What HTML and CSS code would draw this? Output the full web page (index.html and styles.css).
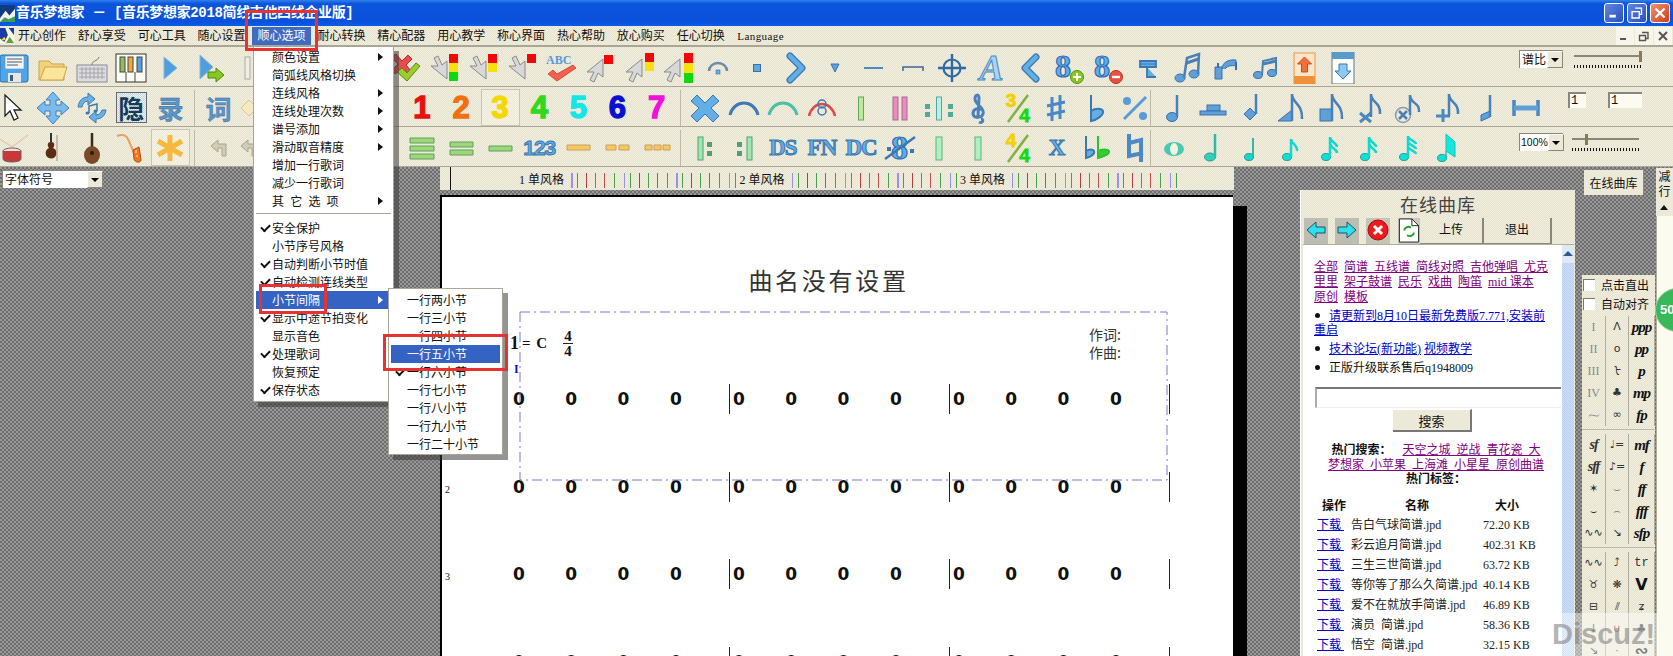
FILE: index.html
```html
<!DOCTYPE html>
<html lang="zh">
<head>
<meta charset="utf-8">
<title>音乐梦想家</title>
<link rel="stylesheet" href="styles.css">
</head>
<body>
<svg class="defs" width="0" height="0" aria-hidden="true">
  <defs>
    <symbol id="save" viewBox="0 0 32 32"><rect x="2" y="3" width="28" height="27" rx="2" fill="#4fa5ea" stroke="#2a6ea8"/><rect x="7" y="4" width="19" height="13" fill="#f4f4f4" stroke="#5a8fc0" stroke-width=".6"/><path d="M9 7h15M9 10h15M9 13h11" stroke="#4a5a70"/><rect x="10" y="21" width="13" height="9" fill="#e6e6e6"/><rect x="12" y="23" width="3" height="6" fill="#3d5a78"/></symbol>
    <symbol id="folder" viewBox="0 0 32 32"><path d="M2 9h10l3 3h12v16H2z" fill="#f2d27a" stroke="#c9a549"/><path d="M3 28l5-13h22l-4 13z" fill="#fbe49b" stroke="#c9a549"/></symbol>
    <symbol id="kbd" viewBox="0 0 32 32"><path d="M16 13c0-5 5-3 7-8" fill="none" stroke="#777"/><rect x="1" y="13" width="30" height="17" fill="#dcdcdc" stroke="#8a8a9a"/><path d="M3 17h26M3 21h26M3 25h26M6 15v12M10 15v12M14 15v12M18 15v12M22 15v12M26 15v12" stroke="#9a9aa6" stroke-width=".8"/></symbol>
    <symbol id="piano" viewBox="0 0 32 32"><rect x="1" y="2" width="30" height="28" fill="#fcfcf4" stroke="#333"/><rect x="5" y="5" width="5" height="15" fill="#8cc05a" stroke="#444"/><rect x="13" y="5" width="5" height="15" fill="#f0a838" stroke="#444"/><rect x="22" y="5" width="5" height="15" fill="#5aa0e0" stroke="#444"/><path d="M11 20v10M20 20v10" stroke="#444"/></symbol>
    <symbol id="play" viewBox="0 0 32 32"><path d="M10 5l13 11-13 11z" fill="#4f9fe0" stroke="#8ab4d8"/></symbol>
    <symbol id="playg" viewBox="0 0 32 32"><path d="M6 3l13 12-13 12z" fill="#4f9fe0" stroke="#8ab4d8"/><path d="M14 20h8v-4l8 7-8 7v-4h-8z" fill="#86c820" stroke="#4f8a10"/></symbol>
    <symbol id="vbar" viewBox="0 0 32 32"><rect x="12" y="5" width="5" height="22" fill="#f0eee0" stroke="#aaa"/></symbol>
    <symbol id="chk" viewBox="0 0 32 32"><path d="M2 5l5-3 6 7 6-6 4 4-6 6 6 7-4 4-6-7-7 5-3-4 6-6z" fill="#e84c4c" stroke="#b83030"/><path d="M8 20l5-4 5 5 9-10 4 3-13 15z" fill="#9ccc30" stroke="#5a8a10"/></symbol>
    <path id="cur" d="M3 3v18l5-4 4 9 4-2-4-8h7z" fill="#d8d8d8" stroke="#8a8a8a"/>
    <symbol id="sd3" viewBox="0 0 32 32"><use href="#cur" transform="rotate(180 11 16) translate(0 2)"/><rect x="21" y="2" width="9" height="9" fill="#f00808"/><rect x="21" y="11" width="9" height="9" fill="#f8e010"/><rect x="21" y="20" width="9" height="9" fill="#10d810"/></symbol>
    <symbol id="sd2" viewBox="0 0 32 32"><use href="#cur" transform="rotate(180 11 16) translate(0 2)"/><rect x="21" y="2" width="9" height="9" fill="#f00808"/><rect x="21" y="11" width="9" height="9" fill="#f8e010"/></symbol>
    <symbol id="sd1" viewBox="0 0 32 32"><use href="#cur" transform="rotate(180 11 16) translate(0 2)"/><rect x="21" y="2" width="9" height="9" fill="#f00808"/></symbol>
    <symbol id="abc" viewBox="0 0 32 32"><text class="svgt" x="1" y="12" font-size="12" fill="#5a9ad8">ABC</text><path d="M3 22l5-4 4 4 16-9 3 3-19 13z" fill="#f46050" stroke="#c03020" stroke-width=".7"/></symbol>
    <symbol id="su1" viewBox="0 0 32 32"><use href="#cur" transform="translate(22 4) scale(-1 1)"/><rect x="20" y="3" width="9" height="9" fill="#f00808"/></symbol>
    <symbol id="su2" viewBox="0 0 32 32"><use href="#cur" transform="translate(21 4) scale(-1 1)"/><rect x="21" y="1" width="9" height="9" fill="#f00808"/><rect x="21" y="10" width="9" height="9" fill="#f8e010"/></symbol>
    <symbol id="su3" viewBox="0 0 32 32"><use href="#cur" transform="translate(20 4) scale(-1 1)"/><rect x="21" y="1" width="9" height="10" fill="#f00808"/><rect x="21" y="11" width="9" height="10" fill="#f8e010"/><rect x="21" y="21" width="9" height="10" fill="#10d810"/></symbol>
    <symbol id="arcs" viewBox="0 0 32 32"><path d="M7 19a9 8 0 0 1 18 0" fill="none" stroke="#6d8aa6" stroke-width="2.5"/><rect x="14" y="18" width="4" height="4" fill="#5fb0e8" stroke="#3a70b0" stroke-width=".6"/></symbol>
    <symbol id="sq" viewBox="0 0 32 32"><rect x="12.5" y="12.5" width="7" height="7" fill="#5fa8e4" stroke="#3a70b0"/></symbol>
    <symbol id="chr" viewBox="0 0 32 32"><path d="M10 4l12 12-12 12" fill="none" stroke="#3a78b0" stroke-width="7" stroke-linejoin="round" stroke-linecap="round"/><path d="M10 4l12 12-12 12" fill="none" stroke="#62aee6" stroke-width="4.5" stroke-linejoin="round" stroke-linecap="round"/></symbol>
    <symbol id="chl" viewBox="0 0 32 32"><path d="M22 5l-11 11 11 11" fill="none" stroke="#3a78b0" stroke-width="7" stroke-linejoin="round" stroke-linecap="round"/><path d="M22 5l-11 11 11 11" fill="none" stroke="#62aee6" stroke-width="4.5" stroke-linejoin="round" stroke-linecap="round"/></symbol>
    <symbol id="tri" viewBox="0 0 32 32"><path d="M12 12h8l-4 8z" fill="#5fa0d8" stroke="#3a70b0"/></symbol>
    <symbol id="d1" viewBox="0 0 32 32"><rect x="6" y="15" width="19" height="2" fill="#4a8ac8"/></symbol>
    <symbol id="d2" viewBox="0 0 32 32"><path d="M6 19v-4h20v4" fill="none" stroke="#3a6a9a" stroke-width="1.5"/></symbol>
    <symbol id="cross" viewBox="0 0 32 32"><circle cx="16" cy="16" r="8.5" fill="none" stroke="#2f6aa8" stroke-width="2.2"/><path d="M16 2v28M2 16h28" stroke="#2f6aa8" stroke-width="2.4"/></symbol>
    <symbol id="p8" viewBox="0 0 32 32"><text class="svgt" x="1" y="25" font-size="32" fill="#62aee6" stroke="#2f6db5" stroke-width="1.2">8</text><circle cx="23" cy="25" r="6.5" fill="#88c820" stroke="#5a8a10"/><path d="M23 21v8M19 25h8" stroke="#fff" stroke-width="2"/></symbol>
    <symbol id="m8" viewBox="0 0 32 32"><text class="svgt" x="1" y="25" font-size="32" fill="#62aee6" stroke="#2f6db5" stroke-width="1.2">8</text><circle cx="23" cy="25" r="6.5" fill="#e85040" stroke="#b03020"/><path d="M19 25h8" stroke="#fff" stroke-width="2.4"/></symbol>
    <symbol id="tee" viewBox="0 0 32 32"><path d="M8 9h16v6H8zM15 15v10h9" fill="#62aee6" stroke="#3a78b0" stroke-width="1.800"/><path d="M8 12h16" stroke="#3a78b0"/></symbol>
    <symbol id="notes2" viewBox="0 0 32 32"><ellipse cx="9" cy="26" rx="5" ry="4" fill="#5fa0d8" stroke="#3a70b0"/><ellipse cx="23" cy="22" rx="5" ry="4" fill="#5fa0d8" stroke="#3a70b0"/><path d="M13 26L16 6 28 2 27 22" fill="none" stroke="#4a80b8" stroke-width="2.5"/><path d="M15.500 11l12-4" stroke="#4a80b8" stroke-width="3"/></symbol>
    <symbol id="notes3" viewBox="0 0 32 32"><path d="M5 15h7v12H5zM12 17c0-6 6-10 14-9v6c-5-1-9 0-11 3" fill="#5fa0d8" stroke="#3a70b0"/><path d="M8 16v-5M26 10v8" stroke="#3a70b0" stroke-width="2"/></symbol>
    <symbol id="notes4" viewBox="0 0 32 32"><ellipse cx="9" cy="23" rx="4.500" ry="3.500" fill="#5fa0d8" stroke="#3a70b0"/><ellipse cx="23" cy="21" rx="4.500" ry="3.500" fill="#5fa0d8" stroke="#3a70b0"/><path d="M13 23l1-14 13-3v15" fill="none" stroke="#4a80b8" stroke-width="2"/><path d="M14 12l13-3" stroke="#4a80b8" stroke-width="3"/></symbol>
    <symbol id="upl" viewBox="0 0 32 32"><rect x="6" y="1" width="21" height="31" fill="#fbe6cc" stroke="#f0953a"/><rect x="6" y="24" width="21" height="8" fill="#f0903a"/><path d="M16.500 5l7 7h-4v8h-6v-8h-4z" fill="#f0703a" stroke="#c85020"/></symbol>
    <symbol id="dnl" viewBox="0 0 32 32"><rect x="5" y="0" width="22" height="32" fill="#fcfcfc" stroke="#5a7a90"/><rect x="5" y="0" width="22" height="7" fill="#5a9ac8"/><path d="M16 27l-8-8h4v-7h8v7h4z" fill="#8cc8f0" stroke="#3a78b0"/></symbol>
    <symbol id="arrow" viewBox="0 0 32 32"><path d="M7 3v21l5-5 4 9 4-2-4-8h7z" fill="#fff" stroke="#222" stroke-width="1.3"/></symbol>
    <symbol id="move" viewBox="0 0 32 32"><path d="M16 0l7 8h-4v5h5V9l8 7-8 7v-4h-5v5h4l-7 8-7-8h4v-5H8v4l-8-7 8-7v4h5V8H9z" fill="#7cbcec" stroke="#3a80bc"/></symbol>
    <symbol id="swap" viewBox="0 0 32 32"><path d="M2 15C3 8 7 5 12 5V1l7 6-7 6V9c-3 0-5 2-6 6z" fill="#6ab0e6" stroke="#3a78b0"/><path d="M30 18c-1 6-5 9-10 9v4l-7-6 7-6v4c3 0 5-2 6-5z" fill="#6ab0e6" stroke="#3a78b0"/><path d="M13 21v-7l8-2v7" fill="none" stroke="#3a78b0" stroke-width="1.500"/><ellipse cx="11.500" cy="21" rx="2" ry="1.500" fill="#3a78b0"/><ellipse cx="19.500" cy="19" rx="2" ry="1.500" fill="#3a78b0"/></symbol>
    <symbol id="diam" viewBox="0 0 32 32"><path d="M8 16l8-8 8 8-8 8z" fill="#f4e9c0" stroke="#d8c890"/></symbol>
    <symbol id="x" viewBox="0 0 32 32"><path d="M8 3l8 8 8-8 6 6-8 7 8 8-6 6-8-8-8 8-6-6 8-8-8-7z" fill="#62aee6" stroke="#3a78b0"/></symbol>
    <symbol id="arcb" viewBox="0 0 32 32"><path d="M2 23C6 7 26 7 30 23" fill="none" stroke="#3e78b8" stroke-width="3"/></symbol>
    <symbol id="arcg" viewBox="0 0 32 32"><path d="M2 23C6 7 26 7 30 23" fill="none" stroke="#4ac0a8" stroke-width="3"/></symbol>
    <symbol id="arcr" viewBox="0 0 32 32"><path d="M3 24C7 8 25 8 29 24" fill="none" stroke="#e04848" stroke-width="2.500"/><circle cx="16" cy="12" r="4" fill="none" stroke="#3a78b0" stroke-width="1.500"/><circle cx="16" cy="19" r="4" fill="none" stroke="#3a78b0" stroke-width="1.500"/></symbol>
    <symbol id="bg" viewBox="0 0 32 32"><rect x="13.500" y="5" width="5" height="23" fill="#c0e89a" stroke="#60a860"/></symbol>
    <symbol id="bp" viewBox="0 0 32 32"><rect x="9" y="5" width="5" height="23" fill="#f08ab8" stroke="#a06aa0"/><rect x="18" y="5" width="5" height="23" fill="#f08ab8" stroke="#a06aa0"/></symbol>
    <symbol id="brep" viewBox="0 0 32 32"><rect x="13.500" y="5" width="5" height="23" fill="#b8f0e8" stroke="#50a8a0"/><path d="M2 12h5v5H2zM2 20h5v5H2zM25 12h5v5h-5zM25 20h5v5h-5z" fill="#50a8a0"/></symbol>
    <symbol id="bn" viewBox="0 0 32 32"><rect x="13" y="5" width="6" height="23" fill="#b0f0c0" stroke="#60b080"/></symbol>
    <symbol id="repl" viewBox="0 0 32 32"><rect x="9" y="5" width="5" height="23" fill="#a0e8b0" stroke="#50a070"/><path d="M18 10h5v5h-5zM18 19h5v5h-5z" fill="#50a070"/></symbol>
    <symbol id="repr" viewBox="0 0 32 32"><rect x="19" y="5" width="5" height="23" fill="#a0e8b0" stroke="#50a070"/><path d="M9 10h5v5H9zM9 19h5v5H9z" fill="#50a070"/></symbol>
    <symbol id="clef" viewBox="0 0 32 32"><path d="M17 30c4 2 5-3 2-3M16 24L17 6c0-4-4-4-4 1 0 6 10 8 8 15-1 4-9 5-10 0 0-5 5-7 7-3" fill="none" stroke="#4a80c0" stroke-width="3"/></symbol>
    <symbol id="sharp" viewBox="0 0 32 32"><path d="M12 5v24M20 3v24M7 14l18-4M7 23l18-4" stroke="#4a88c8" stroke-width="3"/></symbol>
    <symbol id="flat" viewBox="0 0 32 32"><path d="M11 3v26c6-1 13-6 12-10-1-3-8-3-12 0" fill="#62aee6" stroke="#3a78b0" stroke-width="2"/></symbol>
    <symbol id="ratio" viewBox="0 0 32 32"><path d="M27 5L5 27" stroke="#5a9ad8" stroke-width="3"/><circle cx="8" cy="9" r="4" fill="#5a9ad8"/><circle cx="24" cy="24" r="4" fill="#5a9ad8"/></symbol>
    <symbol id="n1" viewBox="0 0 32 32"><ellipse cx="14" cy="25" rx="5.500" ry="4.500" fill="#5fa0d8" stroke="#3a70b0"/><path d="M19 25V3" stroke="#4a80b8" stroke-width="2.500"/></symbol>
    <symbol id="rest" viewBox="0 0 32 32"><rect x="10" y="13" width="13" height="6" fill="#5fa0d8" stroke="#3a70b0"/><rect x="3" y="19" width="26" height="4" fill="#5fa0d8" stroke="#3a70b0"/></symbol>
    <symbol id="nd" viewBox="0 0 32 32"><path d="M8 22l6-6 6 6-6 6z" fill="#5fa0d8" stroke="#3a70b0"/><path d="M20 22V2" stroke="#4a80b8" stroke-width="2.500"/></symbol>
    <symbol id="nt" viewBox="0 0 32 32"><path d="M3 29L17 18v11z" fill="#5fa0d8" stroke="#3a70b0"/><path d="M17 29V2c0 9 11 10 10 25" fill="none" stroke="#4a80b8" stroke-width="2.500"/></symbol>
    <symbol id="ns" viewBox="0 0 32 32"><rect x="6" y="17" width="12" height="12" fill="#5fa0d8" stroke="#3a70b0"/><path d="M18 29V2c0 9 11 10 10 25" fill="none" stroke="#4a80b8" stroke-width="2.500"/></symbol>
    <symbol id="nx" viewBox="0 0 32 32"><path d="M7 21l11 9M18 21L7 30" stroke="#4a88c0" stroke-width="3"/><path d="M18 25V2c0 9 10 8 9 20" fill="none" stroke="#4a80b8" stroke-width="2.500"/></symbol>
    <symbol id="nc" viewBox="0 0 32 32"><circle cx="11" cy="23" r="7.500" fill="none" stroke="#8a98b0" stroke-width="1.500"/><path d="M7 19l8 8M15 19l-8 8" stroke="#4a80b8" stroke-width="2.500"/><path d="M18 23V3c0 9 10 7 9 17" fill="none" stroke="#4a80b8" stroke-width="2.500"/></symbol>
    <symbol id="np" viewBox="0 0 32 32"><path d="M5 24h14M12 17v13" stroke="#4a88c0" stroke-width="3"/><path d="M18 24V2c0 9 10 8 9 20" fill="none" stroke="#4a80b8" stroke-width="2.500"/></symbol>
    <symbol id="nq" viewBox="0 0 32 32"><path d="M10 23l9-4v6l-9 4z" fill="#5fa0d8" stroke="#3a70b0"/><path d="M19 25V3" stroke="#4a80b8" stroke-width="2.500"/></symbol>
    <symbol id="hb" viewBox="0 0 32 32"><path d="M4 8v16M28 8v16" stroke="#4a88c0" stroke-width="3.500"/><rect x="4" y="13.500" width="24" height="5" fill="#5fa0d8"/></symbol>
    <symbol id="drum" viewBox="0 0 32 32"><path d="M0 6l16 10M30 3L14 15" stroke="#e8c4a8" stroke-width="1.200"/><ellipse cx="14" cy="19" rx="9" ry="3" fill="#f0e0d8" stroke="#666"/><path d="M5 19v8c0 4 18 4 18 0v-8" fill="#c83838" stroke="#666"/></symbol>
    <symbol id="violin" viewBox="0 0 32 32"><path d="M14 1v9" stroke="#333" stroke-width="2"/><path d="M20 3v26" stroke="#a89070"/><path d="M14 10c-5 0-3 5-2 6-2 1-4 3-3 7s9 5 10 0-1-6-3-7c1-1 3-6-2-6z" fill="#5a2c14"/></symbol>
    <symbol id="mando" viewBox="0 0 32 32"><path d="M16 1v15" stroke="#3a2a1a" stroke-width="2.500"/><ellipse cx="16" cy="23" rx="8" ry="9" fill="#7a4a28"/><circle cx="16" cy="21" r="2" fill="#2a1a0a"/></symbol>
    <symbol id="sax" viewBox="0 0 32 32"><path d="M2 4c5-2 9-1 11 3l6 14" fill="none" stroke="#e8a060" stroke-width="2"/><path d="M18 18l6-3 2 13c0 3-6 3-7-1z" fill="#f07820" stroke="#b84810"/><path d="M21 18v3M22 23v2" stroke="#fff0c0"/></symbol>
    <symbol id="ast" viewBox="0 0 32 32"><path d="M16 3v26M4 9l24 14M28 9L4 23" stroke="#f6b840" stroke-width="5"/></symbol>
    <symbol id="ag" viewBox="0 0 32 32"><path d="M8 14l7-6v4h8v12h-4v-8h-4v4z" fill="#d0ccb8" stroke="#a8a48c"/></symbol>
    <symbol id="l3" viewBox="0 0 32 32"><path d="M4 6h24v5H4zM4 14h24v5H4zM4 22h24v5H4z" fill="#9cd878" stroke="#60a060"/></symbol>
    <symbol id="l2" viewBox="0 0 32 32"><path d="M5 10h23v5H5zM5 18h23v5H5z" fill="#9cd878" stroke="#60a060"/></symbol>
    <symbol id="l1" viewBox="0 0 32 32"><path d="M5 14h23v5H5z" fill="#9cd878" stroke="#60a060"/></symbol>
    <symbol id="o1" viewBox="0 0 32 32"><path d="M5 13h23v5H5z" fill="#f8c860" stroke="#c8a060"/></symbol>
    <symbol id="o2" viewBox="0 0 32 32"><path d="M5 13h10v5H5zM18 13h10v5H18z" fill="#f8c860" stroke="#c8a060"/></symbol>
    <symbol id="o3" viewBox="0 0 32 32"><path d="M4 13h7v5H4zM13 13h7v5h-7zM22 13h7v5h-7z" fill="#f8c860" stroke="#c8a060"/></symbol>
    <symbol id="segno" viewBox="0 0 32 32"><text class="svgt" x="7" y="27" font-size="34" fill="#62aee6" stroke="#2f6db5" stroke-width="1.200">8</text><path d="M1 27L31 5" stroke="#3a78b0" stroke-width="2.500"/><path d="M3 15h4v4H3zM26 17h4v4h-4z" fill="#3a78b0"/></symbol>
    <symbol id="ts" viewBox="0 0 32 32"><path d="M27 3L7 30" stroke="#80b040" stroke-width="2.500"/></symbol>
    <symbol id="flat2" viewBox="0 0 32 32"><path d="M6 4v22c5-1 9-4 8-7-1-2-5-2-8 0" fill="#62aee6" stroke="#3a78b0" stroke-width="2"/><path d="M18 4v22c5-1 12-4 11-7-1-2-8-2-11 0" fill="#30d030" stroke="#30c030" stroke-width="2"/></symbol>
    <symbol id="nat" viewBox="0 0 32 32"><path d="M10 2v22l14-3M22 30V8L10 11" fill="none" stroke="#4a88c8" stroke-width="4"/></symbol>
    <symbol id="cw" viewBox="0 0 32 32"><ellipse cx="16" cy="17" rx="10" ry="7" fill="#4ac8b0"/><ellipse cx="16" cy="17" rx="4" ry="6" fill="#f4f2e0"/></symbol>
    <symbol id="c2" viewBox="0 0 32 32"><ellipse cx="13" cy="25" rx="5.500" ry="4" fill="#30d0b8" stroke="#2aa090"/><path d="M18 25V2" stroke="#30b8a8" stroke-width="2.500"/></symbol>
    <symbol id="c4" viewBox="0 0 32 32"><ellipse cx="13" cy="25" rx="4.500" ry="3.500" fill="#10d8d0" stroke="#2aa090"/><path d="M17 25V6" stroke="#30b8a8" stroke-width="2"/></symbol>
    <symbol id="c8" viewBox="0 0 32 32"><ellipse cx="12" cy="25" rx="4.500" ry="3.500" fill="#10e0d8" stroke="#2aa090"/><path d="M16 25V7c0 5 7 6 6 12" fill="none" stroke="#10d8d0" stroke-width="2.500"/></symbol>
    <symbol id="c16" viewBox="0 0 32 32"><ellipse cx="12" cy="25" rx="4.500" ry="3.500" fill="#10e0d8" stroke="#2aa090"/><path d="M16 25V5c0 5 7 6 7 10M16 11c0 5 7 6 7 10" fill="none" stroke="#10d8d0" stroke-width="2.500"/></symbol>
    <symbol id="c32" viewBox="0 0 32 32"><ellipse cx="12" cy="25" rx="4.500" ry="3.500" fill="#10e0d8" stroke="#2aa090"/><path d="M16 25V4c0 4 8 5 8 8M16 9c0 4 8 5 8 8M16 14c0 4 8 5 8 8" fill="none" stroke="#10d8d0" stroke-width="2.500"/></symbol>
    <symbol id="c64" viewBox="0 0 32 32"><ellipse cx="11" cy="26" rx="4.500" ry="3.500" fill="#10e0d8" stroke="#2aa090"/><path d="M15 26V2l9 8v15l-9-6z" fill="#10e8e0" stroke="#20c0b8"/></symbol>
  </defs>
</svg>

<div class="app">
  <header class="titlebar">
    <svg class="applogo" viewBox="0 0 16 18"><rect width="16" height="18" fill="#123a80"/><path d="M0 14l6-8 4 5 6-7v14H0z" fill="#f4f4f4"/><path d="M0 18l5-5 4 2 7-3v6z" fill="#3aa050"/></svg>
    <span class="title-text">音乐梦想家 － [音乐梦想家2018简线吉他四线企业版]</span>
    <div class="win-btns">
      <span class="wb"><svg viewBox="0 0 20 20"><rect x="5" y="12" width="7" height="3" fill="#fff"/></svg></span>
      <span class="wb"><svg viewBox="0 0 20 20"><path d="M8 4.500h7v7h-2M4.500 8.500h8v7h-8z" fill="none" stroke="#fff" stroke-width="1.500"/></svg></span>
      <span class="wb wb-close"><svg viewBox="0 0 20 20"><path d="M5 5l10 10M15 5L5 15" stroke="#fff" stroke-width="2.500"/></svg></span>
    </div>
  </header>

  <nav class="menubar dith">
    <svg class="menulogo" viewBox="0 0 16 17"><rect width="16" height="17" fill="#fbf8e0"/><path d="M0 0h6l3 8L5 16 0 12zM10 0h6v8z" fill="#1a3aa8"/><path d="M7 17l4-7 5 7z" fill="#60a040"/><path d="M1 14l4-4 2 4z" fill="#f0d030"/></svg>
    <span class="mi">开心创作</span><span class="mi">舒心享受</span><span class="mi">可心工具</span><span class="mi">随心设置</span><span class="mi mi-on">顺心选项</span><span class="mi">耐心转换</span><span class="mi">精心配器</span><span class="mi">用心教学</span><span class="mi">称心界面</span><span class="mi">热心帮助</span><span class="mi">放心购买</span><span class="mi">任心切换</span><span class="mi mi-lang">Language</span>
    <div class="mdi">
      <span class="mdib"><svg viewBox="0 0 18 18"><rect x="4" y="11" width="6" height="2" fill="#555"/></svg></span>
      <span class="mdib"><svg viewBox="0 0 18 18"><path d="M7 5.500h6v6h-2M4.500 8.500h6v5h-6z" fill="none" stroke="#555" stroke-width="1.400"/></svg></span>
      <span class="mdib"><svg viewBox="0 0 18 18"><path d="M5 5l8 8M13 5l-8 8" stroke="#555" stroke-width="2"/></svg></span>
    </div>
  </nav>

  <section class="toolbar dith">
    <span class="cell"><svg class="ic"><use href="#save"/></svg></span>
    <span class="cell"><svg class="ic"><use href="#folder"/></svg></span>
    <span class="cell"><svg class="ic"><use href="#kbd"/></svg></span>
    <span class="cell"><svg class="ic"><use href="#piano"/></svg></span>
    <span class="cell"><svg class="ic"><use href="#play"/></svg></span>
    <span class="cell"><svg class="ic"><use href="#playg"/></svg></span>
    <span class="cell"><svg class="ic"><use href="#vbar"/></svg></span>
    <span class="cell"></span><span class="cell"></span><span class="cell"></span>
    <span class="cell"><svg class="ic"><use href="#chk"/></svg></span>
    <span class="cell"><svg class="ic"><use href="#sd3"/></svg></span>
    <span class="cell"><svg class="ic"><use href="#sd2"/></svg></span>
    <span class="cell"><svg class="ic"><use href="#sd1"/></svg></span>
    <span class="cell"><svg class="ic"><use href="#abc"/></svg></span>
    <span class="cell"><svg class="ic"><use href="#su1"/></svg></span>
    <span class="cell"><svg class="ic"><use href="#su2"/></svg></span>
    <span class="cell"><svg class="ic"><use href="#su3"/></svg></span>
    <span class="cell"><svg class="ic"><use href="#arcs"/></svg></span>
    <span class="cell"><svg class="ic"><use href="#sq"/></svg></span>
    <span class="cell"><svg class="ic"><use href="#chr"/></svg></span>
    <span class="cell"><svg class="ic"><use href="#tri"/></svg></span>
    <span class="cell"><svg class="ic"><use href="#d1"/></svg></span>
    <span class="cell"><svg class="ic"><use href="#d2"/></svg></span>
    <span class="cell"><svg class="ic"><use href="#cross"/></svg></span>
    <span class="cell gl gl-a">A</span>
    <span class="cell"><svg class="ic"><use href="#chl"/></svg></span>
    <span class="cell"><svg class="ic"><use href="#p8"/></svg></span>
    <span class="cell"><svg class="ic"><use href="#m8"/></svg></span>
    <span class="cell"><svg class="ic"><use href="#tee"/></svg></span>
    <span class="cell"><svg class="ic"><use href="#notes2"/></svg></span>
    <span class="cell"><svg class="ic"><use href="#notes3"/></svg></span>
    <span class="cell"><svg class="ic"><use href="#notes4"/></svg></span>
    <span class="cell"><svg class="ic"><use href="#upl"/></svg></span>
    <span class="cell"><svg class="ic"><use href="#dnl"/></svg></span>
    <div class="ctl ctl-r1">
      <span class="sel sel-ratio"><span class="sel-txt">谱比</span><span class="sel-btn"></span></span>
      <div class="slider slider-end"><i class="track"></i><i class="thumb"></i><i class="ticks"></i></div>
    </div>
  </section>

  <section class="toolbar dith">
    <span class="cell"><svg class="ic"><use href="#arrow"/></svg></span>
    <span class="cell"><svg class="ic"><use href="#move"/></svg></span>
    <span class="cell"><svg class="ic"><use href="#swap"/></svg></span>
    <span class="cell pressed-dark"><span class="gl gl-yin">隐</span></span>
    <span class="cell gl gl-lu">录</span>
    <i class="sep"></i>
    <span class="cell gl gl-ci">词</span>
    <span class="cell"><svg class="ic ic-shift"><use href="#diam"/></svg></span>
    <span class="cell"></span><span class="cell"></span><span class="cell"></span>
    <i class="sep sep-hide"></i>
    <span class="cell gl num c1">1</span>
    <span class="cell gl num c2">2</span>
    <span class="cell gl num c3 pressed">3</span>
    <span class="cell gl num c4">4</span>
    <span class="cell gl num c5">5</span>
    <span class="cell gl num c6">6</span>
    <span class="cell gl num c7">7</span>
    <i class="sep"></i>
    <span class="cell"><svg class="ic"><use href="#x"/></svg></span>
    <span class="cell"><svg class="ic"><use href="#arcb"/></svg></span>
    <span class="cell"><svg class="ic"><use href="#arcg"/></svg></span>
    <span class="cell"><svg class="ic"><use href="#arcr"/></svg></span>
    <span class="cell"><svg class="ic"><use href="#bg"/></svg></span>
    <span class="cell"><svg class="ic"><use href="#bp"/></svg></span>
    <span class="cell"><svg class="ic"><use href="#brep"/></svg></span>
    <span class="cell"><svg class="ic"><use href="#clef"/></svg></span>
    <span class="cell meter"><i class="m-top m-y">3</i><svg class="ic"><use href="#ts"/></svg><i class="m-bot">4</i></span>
    <span class="cell"><svg class="ic"><use href="#sharp"/></svg></span>
    <span class="cell"><svg class="ic"><use href="#flat"/></svg></span>
    <span class="cell"><svg class="ic"><use href="#ratio"/></svg></span>
    <i class="sep sep-tight"></i>
    <span class="cell"><svg class="ic"><use href="#n1"/></svg></span>
    <span class="cell"><svg class="ic"><use href="#rest"/></svg></span>
    <span class="cell"><svg class="ic"><use href="#nd"/></svg></span>
    <span class="cell"><svg class="ic"><use href="#nt"/></svg></span>
    <span class="cell"><svg class="ic"><use href="#ns"/></svg></span>
    <span class="cell"><svg class="ic"><use href="#nx"/></svg></span>
    <span class="cell"><svg class="ic"><use href="#nc"/></svg></span>
    <span class="cell"><svg class="ic"><use href="#np"/></svg></span>
    <span class="cell"><svg class="ic"><use href="#nq"/></svg></span>
    <span class="cell"><svg class="ic"><use href="#hb"/></svg></span>
    <div class="ctl ctl-r2">
      <span class="num-in in-a">1</span>
      <span class="num-in in-b">1</span>
    </div>
  </section>

  <section class="toolbar dith">
    <span class="cell"><svg class="ic"><use href="#drum"/></svg></span>
    <span class="cell"><svg class="ic"><use href="#violin"/></svg></span>
    <span class="cell"><svg class="ic"><use href="#mando"/></svg></span>
    <span class="cell"><svg class="ic"><use href="#sax"/></svg></span>
    <span class="cell pressed"><svg class="ic"><use href="#ast"/></svg></span>
    <i class="sep"></i>
    <span class="cell"><svg class="ic"><use href="#ag"/></svg></span>
    <span class="cell"><svg class="ic ic-shift"><use href="#ag"/></svg></span>
    <span class="cell"></span><span class="cell"></span><span class="cell"></span>
    <i class="sep sep-hide"></i>
    <span class="cell"><svg class="ic"><use href="#l3"/></svg></span>
    <span class="cell"><svg class="ic"><use href="#l2"/></svg></span>
    <span class="cell"><svg class="ic"><use href="#l1"/></svg></span>
    <span class="cell gl gl-123">123</span>
    <span class="cell"><svg class="ic"><use href="#o1"/></svg></span>
    <span class="cell"><svg class="ic"><use href="#o2"/></svg></span>
    <span class="cell"><svg class="ic"><use href="#o3"/></svg></span>
    <i class="sep"></i>
    <span class="cell"><svg class="ic"><use href="#repl"/></svg></span>
    <span class="cell"><svg class="ic"><use href="#repr"/></svg></span>
    <span class="cell gl gl-ds">DS</span>
    <span class="cell gl gl-ds">FN</span>
    <span class="cell gl gl-ds">DC</span>
    <span class="cell"><svg class="ic"><use href="#segno"/></svg></span>
    <span class="cell"><svg class="ic"><use href="#bn"/></svg></span>
    <span class="cell"><svg class="ic"><use href="#bn"/></svg></span>
    <span class="cell meter"><i class="m-top m-y">4</i><svg class="ic"><use href="#ts"/></svg><i class="m-bot">4</i></span>
    <span class="cell gl gl-ds">X</span>
    <span class="cell"><svg class="ic"><use href="#flat2"/></svg></span>
    <span class="cell"><svg class="ic"><use href="#nat"/></svg></span>
    <i class="sep sep-tight"></i>
    <span class="cell"><svg class="ic"><use href="#cw"/></svg></span>
    <span class="cell"><svg class="ic"><use href="#c2"/></svg></span>
    <span class="cell"><svg class="ic"><use href="#c4"/></svg></span>
    <span class="cell"><svg class="ic"><use href="#c8"/></svg></span>
    <span class="cell"><svg class="ic"><use href="#c16"/></svg></span>
    <span class="cell"><svg class="ic"><use href="#c16"/></svg></span>
    <span class="cell"><svg class="ic"><use href="#c32"/></svg></span>
    <span class="cell"><svg class="ic"><use href="#c64"/></svg></span>
    <div class="ctl ctl-r3">
      <span class="sel sel-ratio sel-pct"><span class="sel-txt">100%</span><span class="sel-btn"></span></span>
      <div class="slider slider-start"><i class="track"></i><i class="thumb"></i><i class="ticks"></i></div>
    </div>
  </section>

  <main class="workspace">
    <aside class="ws-left">
      <span class="sel sel-font"><span class="sel-txt">字体符号</span><span class="sel-btn"></span></span>
    </aside>

    <section class="doc">
      <div class="ruler dith">
        <i class="ruler-line"></i>
        <div class="ruler-m"><span class="ruler-l">1 单风格</span><i class="ruler-t"></i></div>
        <div class="ruler-m"><span class="ruler-l">2 单风格</span><i class="ruler-t"></i></div>
        <div class="ruler-m"><span class="ruler-l">3 单风格</span><i class="ruler-t"></i></div>
      </div>
      <article class="paper">
        <h1 class="song">曲名没有设置</h1>
        <div class="meta">
          <div class="key"><b class="key-1">1</b><span class="key-c">= C</span>
            <span class="frac"><b>4</b><b class="frac-b">4</b></span></div>
          <div class="credits"><div>作词:</div><div>作曲:</div></div>
        </div>
        <div class="cursor-i">I</div>
        <div class="staff">
          <div class="measure"><b>0</b><b>0</b><b>0</b><b>0</b></div>
          <div class="measure"><b>0</b><b>0</b><b>0</b><b>0</b></div>
          <div class="measure"><b>0</b><b>0</b><b>0</b><b>0</b></div>
        </div>
        <div class="staff"><span class="lineno">2</span>
          <div class="measure"><b>0</b><b>0</b><b>0</b><b>0</b></div>
          <div class="measure"><b>0</b><b>0</b><b>0</b><b>0</b></div>
          <div class="measure"><b>0</b><b>0</b><b>0</b><b>0</b></div>
        </div>
        <div class="staff"><span class="lineno">3</span>
          <div class="measure"><b>0</b><b>0</b><b>0</b><b>0</b></div>
          <div class="measure"><b>0</b><b>0</b><b>0</b><b>0</b></div>
          <div class="measure"><b>0</b><b>0</b><b>0</b><b>0</b></div>
        </div>
        <div class="staff">
          <div class="measure"><b>0</b><b>0</b><b>0</b><b>0</b></div>
          <div class="measure"><b>0</b><b>0</b><b>0</b><b>0</b></div>
          <div class="measure"><b>0</b><b>0</b><b>0</b><b>0</b></div>
        </div>
        <svg class="guide" width="650" height="170"><rect x="1" y="1" width="647" height="168" fill="none" stroke="#7a78c8" stroke-dasharray="10 4 2 4"/></svg>
      </article>
    </section>

    <section class="lib dith">
      <div class="lib-title">在线曲库</div>
      <div class="lib-tools">
        <span class="tbtn"><svg viewBox="0 0 24 24"><path d="M3 12l9-8v5h9v6h-9v5z" fill="#30e0e8" stroke="#205070"/></svg></span>
        <span class="tbtn"><svg viewBox="0 0 24 24"><path d="M21 12l-9-8v5H3v6h9v5z" fill="#30e0e8" stroke="#205070"/></svg></span>
        <span class="tbtn tbtn-plain"><svg viewBox="0 0 24 24"><circle cx="12" cy="12" r="10" fill="#f01818" stroke="#a01010"/><path d="M8 8l8 8M16 8l-8 8" stroke="#fff" stroke-width="3"/></svg></span>
        <span class="tbtn tbtn-doc"><svg viewBox="0 0 22 26"><path d="M1 1h13l7 7v17H1z" fill="#fff" stroke="#222"/><path d="M14 1v7h7" fill="none" stroke="#222"/><path d="M6 13c0-3 4-5 7-3M16 15c0 3-4 5-7 3" fill="none" stroke="#20a020" stroke-width="2"/></svg></span>
        <span class="pbtn pbtn-up">上传</span>
        <span class="pbtn pbtn-out">退出</span>
      </div>
      <div class="web">
        <div class="web-body">
          <p class="cats"><a class="v">全部</a>&nbsp; <a class="v">简谱&nbsp; 五线谱&nbsp; 简线对照&nbsp; 吉他弹唱&nbsp; 尤克里里</a>&nbsp; <a class="v">架子鼓谱</a>&nbsp; <a class="v">民乐</a>&nbsp; <a class="v">戏曲</a>&nbsp; <a class="v">陶笛</a>&nbsp; <a class="v">mid 课本</a><br><a class="v">原创</a>&nbsp; <a class="v">模板</a></p>
          <ul class="notice">
            <li><a class="l">请更新到8月10日最新免费版7.771,安装前<br>重启</a></li>
            <li><a class="l">技术论坛(新功能)</a> <a class="l">视频教学</a></li>
            <li>正版升级联系售后q1948009</li>
          </ul>
          <div class="search-in"></div>
          <div class="search-btn">搜索</div>
          <p class="hot"><b class="hot-k">热门搜索：</b>&nbsp; <a class="v">天空之城&nbsp; 逆战&nbsp; 青花瓷&nbsp; 大<br>梦想家&nbsp; 小苹果&nbsp; 上海滩&nbsp; 小星星&nbsp; 原创曲谱</a><br><b>热门标签：</b></p>
          <table class="files">
            <tr><th>操作</th><th>名称</th><th>大小</th></tr>
            <tr><td><a class="l">下载&nbsp;</a></td><td>告白气球简谱.jpd</td><td>72.20 KB</td></tr>
            <tr><td><a class="l">下载&nbsp;</a></td><td>彩云追月简谱.jpd</td><td>402.31 KB</td></tr>
            <tr><td><a class="l">下载&nbsp;</a></td><td>三生三世简谱.jpd</td><td>63.72 KB</td></tr>
            <tr><td><a class="l">下载&nbsp;</a></td><td>等你等了那么久简谱.jpd</td><td>40.14 KB</td></tr>
            <tr><td><a class="l">下载&nbsp;</a></td><td>爱不在就放手简谱.jpd</td><td>46.89 KB</td></tr>
            <tr><td><a class="l">下载&nbsp;</a></td><td>演员 &nbsp;简谱.jpd</td><td>58.36 KB</td></tr>
            <tr><td><a class="l">下载&nbsp;</a></td><td>悟空 &nbsp;简谱.jpd</td><td>32.15 KB</td></tr>
          </table>
        </div>
        <div class="vscroll"><span class="vs-up"></span></div>
      </div>
    </section>

    <aside class="right">
      <div class="tools-col">
        <div class="online-btn">在线曲库</div>
        <div class="tools dith">
          <label class="cb"><i></i>点击直出</label>
          <label class="cb cb-last"><i></i>自动对齐</label>
          <div class="sym-group">
            <span class="sy lt">I</span><span class="sy">Λ</span><span class="sy dyn">ppp</span>
            <span class="sy lt">II</span><span class="sy">o</span><span class="sy dyn">pp</span>
            <span class="sy lt">III</span><span class="sy">ᡶ</span><span class="sy dyn">p</span>
            <span class="sy lt">IV</span><span class="sy">♣</span><span class="sy dyn">mp</span>
            <span class="sy lt">⁓</span><span class="sy">∞</span><span class="sy dyn">fp</span>
          </div>
          <div class="sym-group">
            <span class="sy dyn2">sf</span><span class="sy">♩=</span><span class="sy dyn">mf</span>
            <span class="sy dyn2">sff</span><span class="sy">♪=</span><span class="sy dyn">f</span>
            <span class="sy">✶</span><span class="sy lt">⌣</span><span class="sy dyn">ff</span>
            <span class="sy">⌣</span><span class="sy lt">⌢</span><span class="sy dyn">fff</span>
            <span class="sy">∿∿</span><span class="sy">↘</span><span class="sy dyn">sfp</span>
          </div>
          <div class="sym-group">
            <span class="sy">∿∿</span><span class="sy">⤴</span><span class="sy tr">tr</span>
            <span class="sy">♉</span><span class="sy">❋</span><span class="sy big">V</span>
            <span class="sy">⊟</span><span class="sy">⫽</span><span class="sy">ʑ</span>
            <span class="sy">↓</span><span class="sy">∪</span><span class="sy">♣</span>
            <span class="sy">↘</span><span class="sy">·</span><span class="sy big">∾</span>
          </div>
        </div>
      </div>
      <div class="scroll-col">
        <div class="sc-btn sc-txt">减<br>行</div>
        <div class="sc-btn sc-up"><i></i></div>
        <div class="sc-track"></div>
      </div>
    </aside>
  </main>

  <div class="menu menu-main">
    <div class="row arrow">颜色设置</div>
    <div class="row">简弧线风格切换</div>
    <div class="row arrow">连线风格</div>
    <div class="row arrow">连线处理次数</div>
    <div class="row arrow">谱号添加</div>
    <div class="row arrow">滑动取音精度</div>
    <div class="row">增加一行歌词</div>
    <div class="row">减少一行歌词</div>
    <div class="row arrow row-wide">其 它 选 项</div>
    <div class="menu-sep"></div>
    <div class="row check">安全保护</div>
    <div class="row">小节序号风格</div>
    <div class="row check">自动判断小节时值</div>
    <div class="row check">自动检测连线类型</div>
    <div class="row arrow active">小节间隔</div>
    <div class="row check">显示中途节拍变化</div>
    <div class="row">显示音色</div>
    <div class="row check">处理歌词</div>
    <div class="row">恢复预定</div>
    <div class="row check">保存状态</div>
  </div>

  <div class="menu menu-sub">
    <div class="row">一行两小节</div>
    <div class="row">一行三小节</div>
    <div class="row">一行四小节</div>
    <div class="row active">一行五小节</div>
    <div class="row check">一行六小节</div>
    <div class="row">一行七小节</div>
    <div class="row">一行八小节</div>
    <div class="row">一行九小节</div>
    <div class="row">一行二十小节</div>
  </div>

  <i class="mark mark-a"></i>
  <i class="mark mark-b"></i>
  <i class="mark mark-c"></i>

  <div class="badge">50</div>
  <div class="watermark">Discuz!</div>
</div>
</body>
</html>
```

FILE: styles.css
```css
* { box-sizing: border-box; }
html, body { margin: 0; padding: 0; }
body { background: #808080; font: 12px/1.2 "Liberation Serif", "Noto Sans CJK SC", serif; color: #111; overflow: hidden; }
i { font-style: normal; }
.defs { position: absolute; }
.svgt { font-family: "Liberation Serif", serif; font-weight: 700; }
.app { position: relative; width: 1673px; height: 656px; overflow: hidden; display: flex; flex-direction: column; }
.dith { background: repeating-conic-gradient(#f1eedd 0 25%, #e6e3d0 0 50%) 0 0 / 2px 2px; }

/* title bar */
.titlebar { flex: 0 0 26px; display: flex; align-items: center; padding-left: 0; background: linear-gradient(#2f80ec 0, #0c55dc 14%, #0a50d8 80%, #0a5cec 100%); }
.applogo { width: 15px; height: 17px; flex: none; }
.title-text { margin-left: 1px; color: #fff; font: 700 14px/26px "Liberation Mono", "Noto Sans CJK SC", monospace; white-space: pre; letter-spacing: -.35px; }
.win-btns { margin-left: auto; margin-right: 3px; display: flex; gap: 3px; }
.wb { width: 20px; height: 20px; border: 1px solid #fff; border-radius: 3px; background: linear-gradient(135deg, #5f86e0, #2a4fc0); display: block; }
.wb svg { display: block; width: 18px; height: 18px; }
.wb-close { background: linear-gradient(135deg, #f09070, #d03c18); }

/* menu bar */
.menubar { flex: 0 0 21px; display: flex; align-items: center; border-bottom: 2px solid #a9a698; position: relative; }
.menulogo { width: 14px; height: 17px; flex: none; margin-right: -2px; }
.mi { width: 59.900px; flex: none; text-align: center; white-space: nowrap; font-size: 12px; line-height: 18px; }
.mi-on { background: #3f6cc0; color: #fff; }
.mi-lang { font-family: "Liberation Serif", serif; font-size: 11px; letter-spacing: .4px; }
.mdi { margin-left: auto; display: flex; margin-right: 1px; }
.mdib { width: 18px; height: 18px; display: block; background: #f8f6ea; margin-left: 1px; }
.mdib svg { display: block; }

/* toolbars */
.toolbar { flex: 0 0 40px; display: flex; align-items: center; padding-top: 2px; border-bottom: 1px solid #a9a698; position: relative; overflow: hidden; }
.toolbar > :first-child { margin-left: -5.500px; }
.cell { flex: 0 0 39.100px; height: 37px; display: flex; align-items: center; justify-content: center; position: relative; }
.ic { width: 32px; height: 32px; display: block; flex: none; }
.ic-shift { margin-left: -18px; }
.sep { flex: none; width: 9px; height: 36px; background: linear-gradient(#bdbaa9, #bdbaa9) center / 1px 100% no-repeat; }
.sep-hide { width: 8px; background: none; }
.sep-tight { width: 1px; margin: 0 3px 0 -4px; background: #bdbaa9; }
.pressed { outline: 1px solid #c8c5b2; outline-offset: -1px; border-top: 1px solid #fff; background: repeating-conic-gradient(#f6f3e4 0 25%, #ece9d8 0 50%) 0 0 / 2px 2px; }
.pressed-dark { padding: 0; }
.gl { font-family: "Liberation Serif", "Noto Sans CJK SC", serif; font-weight: 700; line-height: 1; }
.gl-yin { display: flex; width: 31px; height: 31px; align-items: center; justify-content: center; font-size: 26px; color: #123a5a; border: 1px solid #667; background: repeating-conic-gradient(#bcd8e8 0 25%, #f4f2e2 0 50%) 0 0 / 2px 2px; font-family: "Noto Sans CJK SC", sans-serif; }
.gl-lu, .gl-ci { font-size: 26px; line-height: 32px; color: #5a96c8; font-family: "Noto Sans CJK SC", sans-serif; -webkit-text-stroke: .4px #3a6a9a; }
.gl-a { font-size: 36px; line-height: 36px; font-style: italic; color: #a8d4f4; -webkit-text-stroke: 1px #4a88c0; }
.gl-123 { font-size: 21px; color: #62aee6; -webkit-text-stroke: 1px #3a78b0; font-family: "Liberation Sans", sans-serif; letter-spacing: -1px; }
.gl-ds { font-size: 23px; color: #62aee6; -webkit-text-stroke: 1px #3a78b0; letter-spacing: -1px; }
.num { font-size: 31px; line-height: 34px; font-family: "Liberation Sans", sans-serif; font-weight: 700; font-style: normal; -webkit-text-stroke: 1.300px currentColor; }
.c1 { color: #e81010; }
.c2 { color: #f07010; }
.c3 { color: #f4d800; }
.c4 { color: #30d820; }
.c5 { color: #10e8e8; }
.c6 { color: #0a10d0; }
.c7 { color: #f010d8; }
.meter i { position: absolute; font: 700 19px/1 "Liberation Sans", sans-serif; color: #18d818; -webkit-text-stroke: .8px currentColor; }
.m-top { left: 8px; top: 2px; color: #f4d000 !important; }
.m-bot { right: 7px; bottom: 1px; }

.ctl { position: absolute; display: flex; }
.ctl-r1 { left: 1519px; top: 3px; gap: 10px; }
.ctl-r2 { left: 1568px; top: 5px; gap: 22px; }
.ctl-r3 { left: 1519px; top: 6px; gap: 8px; }
.sel { display: flex; height: 18px; background: #fff; border-top: 1px solid #8a877a; border-left: 1px solid #8a877a; font: 12px/16px "Noto Sans CJK SC", sans-serif; }
.sel-txt { flex: 1; padding-left: 2px; white-space: nowrap; overflow: hidden; }
.sel-btn { flex: 0 0 16px; border: 1px solid #8a877a; border-top-color: #fff; border-left-color: #fff; background: #ece9d8; position: relative; }
.sel-btn::after { content: ""; position: absolute; left: 3px; top: 6px; border: 4px solid transparent; border-top: 4px solid #000; border-bottom: 0; }
.sel-ratio { width: 44px; }
.sel-pct { font: 10.500px/16px "Liberation Sans", sans-serif; }
.sel-pct .sel-txt { padding-left: 1px; overflow: visible; }
.sel-font { width: 101px; margin: 3px 0 0 2px; font-size: 12px; }
.slider { position: relative; width: 70px; height: 18px; }
.track { position: absolute; left: 1px; right: 2px; top: 5px; height: 2px; background: #8a877a; }
.ticks { position: absolute; left: 1px; right: 2px; top: 15px; height: 3px; background: repeating-linear-gradient(90deg, #111 0 1px, transparent 1px 3px); }
.thumb { position: absolute; top: 1px; width: 3px; height: 11px; background: #8a7a50; }
.slider-end .thumb { right: 1px; }
.slider-start .thumb { left: 14px; }
.num-in { height: 16px; background: #fbfbf2; border-top: 2px solid #8a877a; border-left: 2px solid #8a877a; font: 12px/14px "Liberation Mono", monospace; padding-left: 1px; }
.in-a { width: 18px; }
.in-b { width: 34px; }

/* workspace */
.workspace { flex: 1; min-height: 0; display: flex; background: repeating-conic-gradient(#6e6e6e 0 25%, #989898 0 50%) 0 0 / 4px 4px; }
.ws-left { flex: 0 0 440px; }
.doc { flex: 0 0 807px; display: flex; flex-direction: column; }
.ruler { flex: 0 0 23px; width: 794px; display: flex; padding-left: 79px; position: relative; }
.ruler-line { position: absolute; left: 10px; top: 0; bottom: 0; width: 1px; background: #111; }
.ruler-m { flex: 0 0 220.500px; display: flex; padding-top: 5px; }
.ruler-l { flex: 0 0 52px; font-size: 12px; line-height: 16px; white-space: nowrap; }
.ruler-t { flex: 1; margin-bottom: 2px; margin-top: 1px; background: repeating-linear-gradient(90deg, #9a90e8 0 1.500px, transparent 1.500px 6px, #4aa04a 6px 7px, transparent 7px 15px, #b04040 15px 16px, transparent 16px 24px, #4aa04a 24px 25px, transparent 25px 33px, #c05050 33px 34px, transparent 34px 43px, #4aa04a 43px 44px, transparent 44px 52.600px); }
.paper { margin-top: 5px; width: 793px; flex: 1; min-height: 0; background: #fff; border-top: 2px solid #000; border-left: 2px solid #000; box-shadow: 14px 11px 0 #000; position: relative; padding-top: 65px; }
.song { margin: 0; padding-right: 18px; height: 36px; text-align: center; font: 400 24px/36px "Noto Sans CJK SC", sans-serif; letter-spacing: 2.700px; color: #333; }
.meta { height: 28px; margin-top: 27px; display: flex; justify-content: space-between; padding: 0 112px 0 68px; }
.key { display: flex; align-items: center; font: 700 15px/20px "Liberation Serif", serif; height: 36px; }
.key-1 { font-size: 18px; margin-right: 3px; }
.key-c { font-weight: 700; font-size: 15px; word-spacing: 2px; }
.frac { display: flex; flex-direction: column; margin-left: 16px; font-size: 15px; line-height: 14px; align-items: center; }
.frac b { display: block; padding: 0 1px; }
.frac-b { border-top: 1px solid #222; }
.credits { font: 14px/18px "Noto Sans CJK SC", sans-serif; color: #333; }
.cursor-i { height: 21px; margin-top: 10px; padding-left: 72px; color: #1010c0; font: 700 12px/12px "Liberation Serif", serif; }
.staff { display: flex; height: 30px; margin-bottom: 57.500px; padding-left: 68px; position: relative; align-items: center; }
.measure { flex: 0 0 220px; height: 30px; display: grid; grid-template-columns: repeat(4, 52.300px); padding-left: 3px; border-right: 1px solid #222; align-items: center; }
.measure b { font: 700 17px/30px "DejaVu Sans", sans-serif; }
.lineno { position: absolute; left: 3px; top: 12px; font: 10px/12px "Liberation Serif", serif; }
.guide { position: absolute; left: 77px; top: 114px; pointer-events: none; }

/* online library */
.lib { flex: 0 0 275px; margin: 23px 0 0 53px; display: flex; flex-direction: column; border-left: 1px solid #fff; }
.lib-title { flex: 0 0 28px; text-align: center; font: 18px/28px "Noto Sans CJK SC", sans-serif; color: #444; letter-spacing: 1px; }
.lib-tools { flex: 0 0 26px; display: flex; padding-left: 3px; align-items: stretch; }
.tbtn { flex: 0 0 24px; margin-right: 7px; background: #bdbdb4; display: block; }
.tbtn svg { width: 24px; height: 24px; display: block; }
.tbtn-plain { margin-right: 8px; background: #c4c4b8; }
.tbtn-doc { flex: 0 0 22px; margin-right: 0; background: #c8c8bc; }
.tbtn-doc svg { width: 22px; height: 25px; }
.pbtn { border-right: 2px solid #8a877a; border-bottom: 1px solid #8a877a; text-align: center; font: 12px/22px "Noto Sans CJK SC", sans-serif; display: block; }
.pbtn-up { flex: 0 0 64px; }
.pbtn-out { flex: 0 0 68px; }
.web { flex: 1; min-height: 0; margin: 0 1px 0 2px; display: flex; background: #fff; border-top: 1px solid #b0ad9c; }
.web-body { flex: 0 0 259px; padding: 15px 4px 0 11px; overflow: hidden; line-height: 15px; }
.v { color: #800080; text-decoration: underline; }
.l { color: #0000c8; text-decoration: underline; }
.cats { margin: 0; line-height: 15px; }
.notice { margin: 4px 0 0; padding: 0; list-style: none; }
.notice li { margin-bottom: 5px; line-height: 14px; }
.notice li::before { content: ""; display: inline-block; width: 5px; height: 5px; border-radius: 50%; background: #111; margin: 0 9px 2px 1px; }
.search-in { height: 21px; margin: 12px 0 0 1px; width: 246px; border-top: 2px solid #777; border-left: 2px solid #aaa; border-bottom: 1px solid #eee; background: #fff; }
.search-btn { width: 79px; height: 23px; margin: 1px 0 0 79px; text-align: center; border-top: 1px solid #fff; border-right: 2px solid #777; border-bottom: 2px solid #777; background: #ece9d8; font: 13px/21px "Noto Sans CJK SC", sans-serif; }
.hot { margin: 11px 0 0; text-align: center; line-height: 14.500px; font-size: 12px; }
.hot-k { margin-right: 5px; }
.files { margin: 10px 0 0 3px; border-collapse: collapse; table-layout: fixed; width: 214px; }
.files th { font-weight: 700; height: 19px; padding: 0; white-space: nowrap; text-align: center; }
.files td { height: 20px; padding: 0; white-space: nowrap; color: #222; }
.files th:nth-child(1), .files td:nth-child(1) { width: 34px; }
.files th:nth-child(2), .files td:nth-child(2) { width: 132px; }
.files th:nth-child(3), .files td:nth-child(3) { width: 48px; }
.vscroll { flex: 0 0 12px; background: repeating-conic-gradient(#b4cef2 0 25%, #d0e2f8 0 50%) 0 0 / 2px 2px; }
.vs-up { display: block; height: 18px; background: #dfe8f5; position: relative; }
.vs-up::after { content: ""; position: absolute; left: 1px; top: 6px; border: 5px solid transparent; border-bottom: 5px solid #2a5a90; border-top: 0; }

/* right column */
.right { flex: 0 0 98px; display: flex; }
.tools-col { flex: 0 0 79px; padding-left: 7px; display: flex; flex-direction: column; }
.online-btn { width: 60px; height: 25px; margin: 3px 0 80px 2px; background: #ece9d8; text-align: center; font: 12px/25px "Noto Sans CJK SC", sans-serif; border-right: 1px solid #888; }
.tools { flex: 1; min-height: 0; width: 73px; overflow: hidden; }
.cb { display: flex; align-items: center; height: 18px; margin-top: 1px; font: 12px/18px "Noto Sans CJK SC", sans-serif; }
.cb-last { margin-bottom: 3px; }
.cb i { width: 12px; height: 12px; background: #fff; border-top: 1px solid #777; border-left: 1px solid #777; margin: 0 6px 0 1px; }
.sym-group { display: grid; grid-template-columns: 24px 23px 26px; grid-auto-rows: 22px; padding: 0 0 3px; margin-bottom: 4px; border-bottom: 1px solid #bdbaa9; }
.sy { display: flex; align-items: center; justify-content: center; border-right: 1px solid #b0ad9c; font: 11px/22px "DejaVu Sans", "Liberation Serif", serif; color: #333; white-space: nowrap; }
.sy.lt { color: #888; font-family: "Liberation Serif", serif; font-size: 12px; }
.dyn, .dyn2 { font: italic 700 15px/22px "Liberation Serif", serif; color: #111; letter-spacing: -1px; }
.dyn2 { color: #333; font-size: 14px; }
.tr { font: 12px/22px "Liberation Mono", monospace; }
.big { font-size: 16px; font-weight: 700; color: #111; }
.scroll-col { flex: 0 0 19px; display: flex; flex-direction: column; }
.sc-btn { flex: none; background: #ece9d8; border-right: 1px solid #888; text-align: center; margin-left: 1px; }
.sc-txt { height: 31px; margin-top: 1px; font: 12px/15px "Noto Sans CJK SC", sans-serif; }
.sc-up { height: 17px; position: relative; }
.sc-up i { position: absolute; left: 4px; top: 6px; border: 4px solid transparent; border-bottom: 5px solid #111; border-top: 0; }
.sc-track { flex: 1; background: #fbfbf0; border-left: 1px solid #b0ad9c; margin-left: 1px; }

/* popup menus */
.menu { position: absolute; background: #fff; border: 1px solid #a9a698; box-shadow: 5px 5px 0 rgba(60, 60, 60, .55); font: 12px/18px "Noto Sans CJK SC", sans-serif; }
.menu-main { left: 253px; top: 46px; width: 141px; padding: 1px 2px 0; height: 356px; }
.menu-sub { left: 388px; top: 288px; width: 115px; padding: 2px 2px 0; height: 167px; }
.menu .row { height: 18px; padding-left: 16px; position: relative; white-space: nowrap; }
.menu .row-wide { word-spacing: 3.500px; }
.menu .active { background: #3463c4; color: #fff; }
.menu-sep { height: 1px; background: #a9a698; margin: 3px 0 5px; }
.arrow::after { content: ""; position: absolute; right: 8px; top: 5px; border: 4px solid transparent; border-left: 5px solid #111; border-right: 0; }
.active.arrow::after { border-left-color: #fff; }
.check::before { content: ""; position: absolute; left: 5px; top: 5px; width: 7px; height: 4px; border-left: 2px solid #111; border-bottom: 2px solid #111; transform: rotate(-45deg); }
.mark { position: absolute; border: 3px solid #e83232; pointer-events: none; }
.mark-a { left: 245px; top: 10px; width: 73px; height: 41px; }
.mark-b { left: 259px; top: 284px; width: 68px; height: 30px; }
.mark-c { left: 383px; top: 334px; width: 125px; height: 37px; }
.badge { position: absolute; left: 1655px; top: 288px; width: 44px; height: 44px; border-radius: 50%; background: #39b85a; border: 1px solid #9ad0a8; color: #fff; font: 700 13px/42px "Liberation Sans", sans-serif; padding-left: 4px; }
.watermark { position: absolute; left: 1552px; top: 613px; width: 106px; height: 43px; padding: 3px 0 0; background: linear-gradient(90deg, transparent 10px, rgba(255, 255, 255, .45) 10px); color: rgba(130, 130, 130, .6); font: 700 29px/36px "Liberation Sans", sans-serif; white-space: nowrap; }
```
